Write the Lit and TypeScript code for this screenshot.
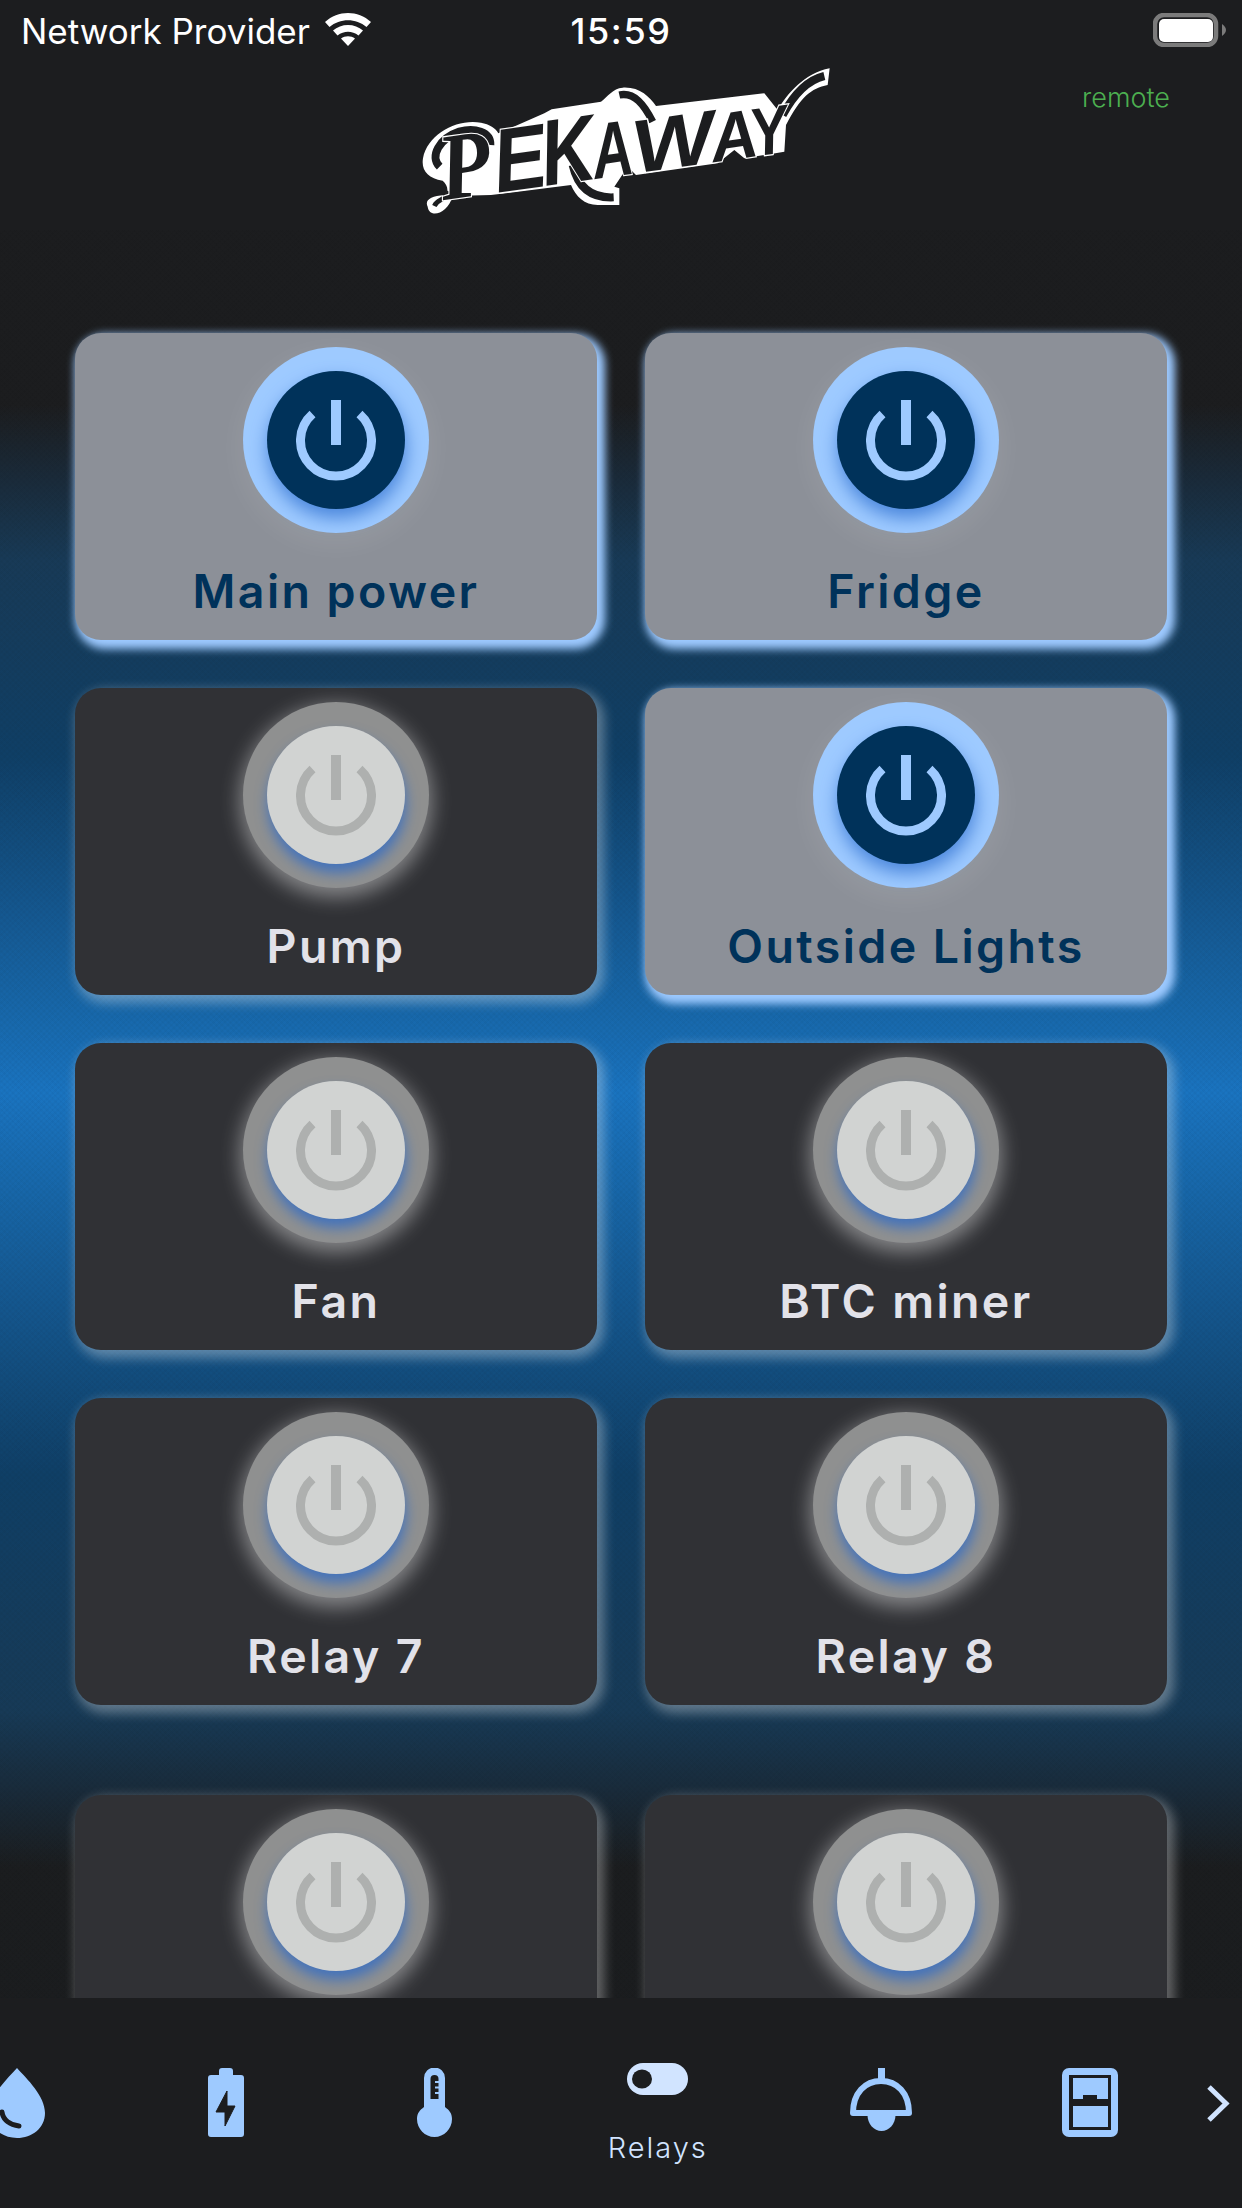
import { LitElement, css, html, svg } from "lit";
import { customElement, property } from "lit/decorators.js";
import { classMap } from "lit/directives/class-map.js";

const powerIcon = svg`
  <rect x="35" y="0" width="10" height="45" fill="currentColor"></rect>
  <path d="M16.5 14 A35.5 35.5 0 1 0 63.5 14" fill="none" stroke="currentColor" stroke-width="9"></path>
`;

@customElement("relay-card")
export class RelayCard extends LitElement {
  @property() name = "";
  @property({ type: Boolean }) on = false;

  static styles = css`
    :host {
      display: block;
    }
    .card {
      box-sizing: border-box;
      height: 307px;
      border-radius: 26px;
      background: #303135;
      box-shadow: 4px 5px 12px 3px rgba(255, 255, 255, 0.32);
      display: flex;
      flex-direction: column;
      align-items: center;
      padding-top: 14px;
      color: #e2e2e9;
    }
    .ring {
      width: 186px;
      height: 186px;
      border-radius: 50%;
      background: #8f9090;
      box-shadow: 0 6px 20px 3px rgba(255, 255, 255, 0.42);
      display: flex;
      align-items: center;
      justify-content: center;
    }
    .disc {
      width: 138px;
      height: 138px;
      border-radius: 50%;
      background: #d1d3d2;
      color: #aeb0af;
      box-shadow: 1px 9px 13px #4473bb;
      display: flex;
      align-items: center;
      justify-content: center;
    }
    .disc svg {
      display: block;
      width: 80px;
      height: 81px;
    }
    .label {
      margin-top: 30px;
      font: 600 46.5px/56px Inter, "Noto Sans", "Liberation Sans", sans-serif;
      letter-spacing: 2.4px;
      white-space: nowrap;
    }
    .card.on {
      background: #8c9098;
      box-shadow: 4px 5px 9px 4px #9ecaff;
      color: #00325a;
    }
    .on .ring {
      background: #9ecaff;
      box-shadow: 0 8px 30px rgba(255, 255, 255, 0.1);
    }
    .on .disc {
      background: #00325a;
      color: #9ecaff;
      box-shadow: 1px 9px 18px #4a86dc;
    }
  `;

  render() {
    return html`
      <div class=${classMap({ card: true, on: this.on })}>
        <div class="ring">
          <div class="disc">
            <svg viewBox="0 0 80 81">${powerIcon}</svg>
          </div>
        </div>
        ${this.name ? html`<div class="label">${this.name}</div>` : ""}
      </div>
    `;
  }
}

const upperRelays = [
  { name: "Main power", on: true },
  { name: "Fridge", on: true },
  { name: "Pump", on: false },
  { name: "Outside Lights", on: true },
  { name: "Fan", on: false },
  { name: "BTC miner", on: false },
  { name: "Relay 7", on: false },
  { name: "Relay 8", on: false },
];

// the next two cards are cut off by the nav before their names show
const lowerRelays = [
  { name: "", on: false },
  { name: "", on: false },
];

const navIcons = {
  water: html`<svg width="56" height="70" viewBox="0 0 56 70">
    <path d="M28 0 C38 11 56 28 56 45 C56 60 43 70 28 70 C13 70 0 60 0 45 C0 28 18 11 28 0Z" fill="#9ecaff"></path>
    <path d="M13 44 C14 52 21 57 30 58" fill="none" stroke="#1c1d1f" stroke-width="5" stroke-linecap="round"></path>
  </svg>`,
  battery: html`<svg width="36" height="69" viewBox="0 0 36 69">
    <path d="M11 7 V3 Q11 0 14 0 H22 Q25 0 25 3 V7 H33 Q36 7 36 10 V66 Q36 69 33 69 H3 Q0 69 0 66 V10 Q0 7 3 7Z" fill="#9ecaff"></path>
    <path d="M19 23 V38 H27 L17 58 V44 H8Z" fill="#1c1d1f" stroke="#1c1d1f" stroke-width="1" stroke-linejoin="round"></path>
  </svg>`,
  temp: html`<svg width="35" height="69" viewBox="0 0 35 69">
    <path d="M7 10 A10.5 10.5 0 0 1 28 10 V39 C32 42 35 45 35 51 C35 61 27 69 17.5 69 C8 69 0 61 0 51 C0 45 3 42 7 39Z" fill="#9ecaff"></path>
    <path d="M13.5 11 Q13.5 7 17.5 7 Q21.5 7 21.5 11 V31 H13.5Z" fill="#1c1d1f"></path>
    <path d="M18 13 H22 V15 H18Z M18 18.500 H22 V20.500 H18Z M18 24 H22 V26 H18Z" fill="#9ecaff"></path>
  </svg>`,
  toggle: html`<svg width="61" height="32" viewBox="0 0 61 32">
    <rect width="61" height="32" rx="16" fill="#d1e4ff"></rect>
    <ellipse cx="15" cy="16" rx="10" ry="9.500" fill="#1c1d1f"></ellipse>
  </svg>`,
  lamp: html`<svg width="62" height="63" viewBox="0 0 62 63">
    <rect x="28" y="0" width="7" height="12" fill="#9ecaff"></rect>
    <path d="M3 45 C3 25 15 13 31 13 C47 13 59 25 59 45Z" fill="none" stroke="#9ecaff" stroke-width="6" stroke-linejoin="round"></path>
    <path d="M17.500 47 H45.500 C45.500 56 39 63 31.500 63 C24 63 17.500 56 17.500 47Z" fill="#9ecaff"></path>
  </svg>`,
  window: html`<svg width="56" height="69" viewBox="0 0 56 69">
    <rect width="56" height="69" rx="7" fill="#9ecaff"></rect>
    <rect x="7" y="7" width="42" height="55" fill="#1c1d1f"></rect>
    <path d="M11 10 H46 V31 H35 V27 H21 V31 H11Z" fill="#9ecaff"></path>
    <rect x="11" y="38" width="35" height="21" fill="#9ecaff"></rect>
  </svg>`,
};

const navItems = [
  { icon: navIcons.water, label: "" },
  { icon: navIcons.battery, label: "" },
  { icon: navIcons.temp, label: "" },
  { icon: navIcons.toggle, label: "Relays" },
  { icon: navIcons.lamp, label: "" },
  { icon: navIcons.window, label: "" },
];

// the lettering stays real text, only the swashes and the backing are drawn
const logoLetter = (ch: string, x: number, size: number, sx: number, serif = false) => svg`
  <text class=${serif ? "lgs" : ""} transform="translate(${x} 378) scale(${sx} 1)" font-size=${size}>${ch}</text>
`;

const logo = svg`
  <path d="M140 470 C130 450 150 438 190 435 C205 425 200 405 185 392 C140 385 120 360 126 325
    C140 250 230 205 300 218 C325 222 345 235 352 250 L490 190 L512 178 L660 155 C680 140 695 115 725 113
    C775 110 805 140 825 168 L1150 130 L1190 180 C1220 130 1270 70 1346 55 L1340 105
    C1290 115 1260 140 1215 225 L1210 305 L1090 325 L1060 300 L1010 340 L765 375 L740 350
    L700 410 L715 415 L715 465 L650 465 C610 465 585 440 570 405 L330 435 L215 438
    C205 475 175 495 155 490 C145 485 142 480 140 470Z" fill="#fff"></path>
  <path d="M176 350 C145 320 175 265 235 245 C280 232 330 245 328 285" fill="none" stroke="#1c1d1f" stroke-width="24"></path>
  <path d="M205 425 C190 455 170 445 160 468" fill="none" stroke="#1c1d1f" stroke-width="14"></path>
  <path d="M715 135 C760 125 790 165 815 215" fill="none" stroke="#1c1d1f" stroke-width="22"></path>
  <path d="M575 345 C590 410 630 445 698 442" fill="none" stroke="#1c1d1f" stroke-width="24"></path>
  <path d="M1205 195 C1240 130 1280 90 1330 78" fill="none" stroke="#1c1d1f" stroke-width="24"></path>
  <g class="lg" transform="rotate(-8 700 300)">
    ${logoLetter("P", 170, 285, 0.9, true)}
    ${logoLetter("E", 335, 270, 0.88)}
    ${logoLetter("K", 480, 280, 0.8)}
    ${logoLetter("A", 632, 235, 0.72)}
    ${logoLetter("W", 755, 225, 1.16)}
    ${logoLetter("A", 990, 205, 0.95)}
    ${logoLetter("Y", 1110, 205, 0.82)}
  </g>
`;

@customElement("app-root")
export class AppRoot extends LitElement {
  static styles = css`
    :host {
      display: block;
      width: 1242px;
      height: 2208px;
      overflow: hidden;
      font-family: Inter, "Noto Sans", "Liberation Sans", sans-serif;
    }
    .page {
      width: 1242px;
      height: 2208px;
      display: flex;
      flex-direction: column;
      background: linear-gradient(
        180deg,
        #1c1d1f 0,
        #1c1d1f 405px,
        #183a57 560px,
        #0f3f66 756px,
        #1a74c0 1093px,
        #0f3f66 1475px,
        #173a57 1710px,
        #1b1d1f 1867px,
        #1b1d1f 2208px
      );
    }
    .status {
      position: relative;
      height: 50px;
      flex: none;
      display: flex;
      align-items: flex-start;
      color: #fff;
    }
    .carrier {
      display: flex;
      align-items: flex-start;
      margin-left: 21px;
      font-size: 35px;
      line-height: 40px;
      padding-top: 11px;
      gap: 15px;
    }
    .carrier svg {
      display: block;
      margin-top: 2px;
    }
    .clock {
      position: absolute;
      left: 0;
      right: 0;
      top: 11px;
      text-align: center;
      font-size: 36px;
      line-height: 40px;
      font-weight: 500;
      letter-spacing: 1.6px;
    }
    .batt {
      margin-left: auto;
      margin-right: 15px;
      margin-top: 13px;
      display: block;
    }
    .head {
      height: 180px;
      flex: none;
      display: grid;
      grid-template-columns: 1fr 480px 1fr;
    }
    .logo {
      display: block;
      width: 480px;
      height: 180px;
    }
    .lg text {
      font-family: "Liberation Sans", sans-serif;
      font-weight: 700;
      font-style: italic;
      fill: #1c1d1f;
      stroke: #fff;
      stroke-width: 7px;
      paint-order: stroke;
    }
    .lg .lgs {
      font-family: "Liberation Serif", serif;
    }
    .remote {
      justify-self: end;
      margin: 30px 72px 0 0;
      color: #4caf50;
      font-size: 27px;
      line-height: 36px;
      font-weight: 300;
    }
    .scroll {
      flex: 1;
      min-height: 0;
      overflow: hidden;
      padding: 103px 75px 0;
      background-image: repeating-linear-gradient(
          45deg,
          rgba(0, 0, 0, 0.025) 0 2px,
          transparent 2px 4px
        ),
        repeating-linear-gradient(-45deg, rgba(0, 0, 0, 0.025) 0 2px, transparent 2px 4px);
    }
    .grid {
      display: grid;
      grid-template-columns: 522px 522px;
      gap: 48px;
    }
    .grid.lower {
      margin-top: 90px;
    }
    nav {
      flex: none;
      height: 210px;
      background: #1c1d1f;
      display: flex;
      overflow: hidden;
      color: #d1e4ff;
    }
    .items {
      display: flex;
      margin-left: -87px;
    }
    .item {
      width: 208.5px;
      flex: none;
      display: flex;
      flex-direction: column;
      align-items: center;
      padding-top: 70px;
      box-sizing: border-box;
    }
    .item.active {
      width: 238.5px;
      padding-top: 65px;
    }
    .item svg {
      display: block;
    }
    .item span {
      margin-top: 35px;
      font-size: 29px;
      line-height: 36px;
      font-weight: 300;
      letter-spacing: 2px;
    }
    .more {
      display: block;
      margin: 87px 0 0 12px;
    }
  `;

  render() {
    return html`
      <div class="page">
        <div class="status">
          <div class="carrier">
            Network Provider
            <svg width="46" height="33" viewBox="0 0 46 33" fill="#fff">
              <path d="M0 9 C13 -3 33 -3 46 9 L41.500 14 C31 5 15 5 4.500 14Z"></path>
              <path d="M8 17.500 C16 10 30 10 38 17.500 L33.500 22.500 C27 17.500 19 17.500 12.500 22.500Z"></path>
              <path d="M16 25.500 C20 22.500 26 22.500 30 25.500 L23 33Z"></path>
            </svg>
          </div>
          <div class="clock">15:59</div>
          <svg class="batt" width="74" height="34" viewBox="0 0 74 34">
            <rect x="2" y="2" width="61" height="30" rx="9" fill="none" stroke="#7b7b7b" stroke-width="4.500"></rect>
            <rect x="6" y="6" width="54" height="23" rx="5" fill="#fff"></rect>
            <path d="M69 11 Q73 14 73 17 Q73 20 69 23Z" fill="#7b7b7b"></path>
          </svg>
        </div>
        <div class="head">
          <div></div>
          <svg class="logo" viewBox="0 0 1440 540">${logo}</svg>
          <div class="remote">remote</div>
        </div>
        <div class="scroll">
          <div class="grid">
            ${upperRelays.map((r) => html`<relay-card .name=${r.name} .on=${r.on}></relay-card>`)}
          </div>
          <div class="grid lower">
            ${lowerRelays.map((r) => html`<relay-card .name=${r.name} .on=${r.on}></relay-card>`)}
          </div>
        </div>
        <nav>
          <div class="items">
            ${navItems.map(
              (n) => html`<div class=${classMap({ item: true, active: !!n.label })}>
                ${n.icon}
                ${n.label ? html`<span>${n.label}</span>` : ""}
              </div>`
            )}
          </div>
          <svg class="more" width="24" height="37" viewBox="0 0 24 37">
            <path d="M3 2 L20 18.500 L3 35" fill="none" stroke="#d1e4ff" stroke-width="5"></path>
          </svg>
        </nav>
      </div>
    `;
  }
}
